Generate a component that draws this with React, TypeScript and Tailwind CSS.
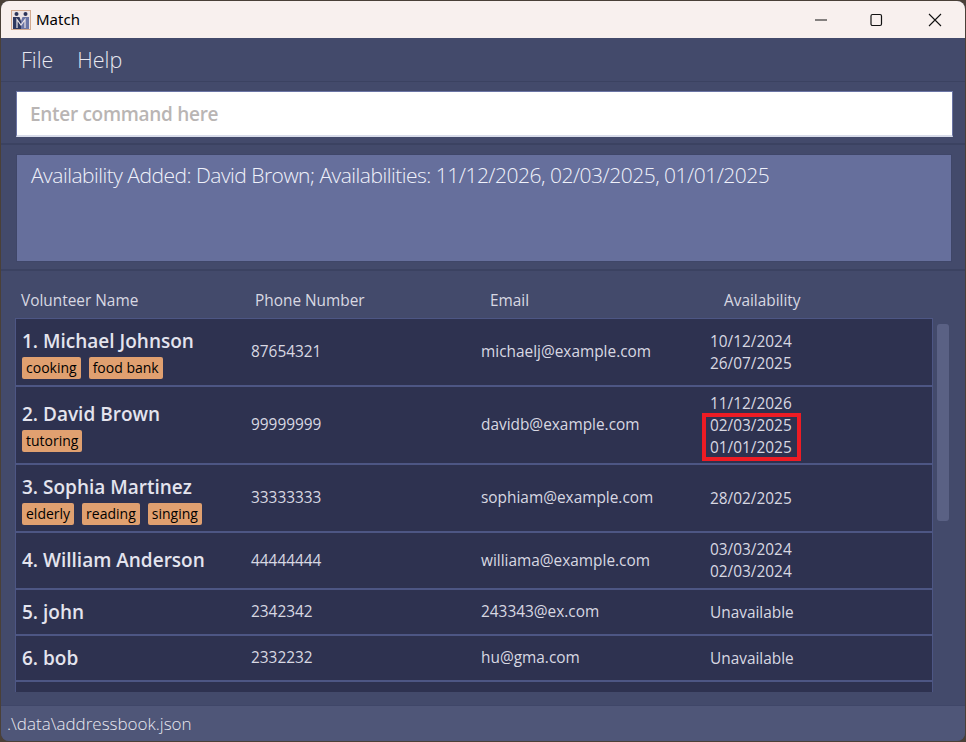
import React from 'react';

interface Volunteer {
  name: string;
  tags: string[];
  phone: string;
  email: string;
  dates: string[];
  height: string;
  nameTop: string;
  marked?: boolean;
}

const VOLUNTEERS: Volunteer[] = [
  { name: '1. Michael Johnson', tags: ['cooking', 'food bank'], phone: '87654321', email: 'michaelj@example.com', dates: ['10/12/2024', '26/07/2025'], height: 'h-[68px]', nameTop: 'pt-[8px]' },
  { name: '2. David Brown', tags: ['tutoring'], phone: '99999999', email: 'davidb@example.com', dates: ['11/12/2026', '02/03/2025', '01/01/2025'], height: 'h-[78px]', nameTop: 'pt-[13px]', marked: true },
  { name: '3. Sophia Martinez', tags: ['elderly', 'reading', 'singing'], phone: '33333333', email: 'sophiam@example.com', dates: ['28/02/2025'], height: 'h-[68px]', nameTop: 'pt-[8px]' },
  { name: '4. William Anderson', tags: [], phone: '44444444', email: 'williama@example.com', dates: ['03/03/2024', '02/03/2024'], height: 'h-[57px]', nameTop: 'pt-[13px]' },
  { name: '5. john', tags: [], phone: '2342342', email: '243343@ex.com', dates: ['Unavailable'], height: 'h-[46px]', nameTop: 'pt-[8px]' },
  { name: '6. bob', tags: [], phone: '2332232', email: 'hu@gma.com', dates: ['Unavailable'], height: 'h-[46px]', nameTop: 'pt-[8px]' },
];

const AppIcon = () => (
  <svg width="20" height="20" viewBox="0 0 20 20" className="shrink-0">
    <rect x="0.5" y="0.5" width="19" height="19" fill="#ece4e6" stroke="#d3aa90" />
    <circle cx="5.5" cy="4" r="2" fill="#2b3358" />
    <circle cx="14.5" cy="4" r="2" fill="#2b3358" />
    <path d="M2 7h6.5l1.5 4v8H2z" fill="#2f3860" />
    <path d="M18 7h-6.5L10 11v8h8z" fill="#6b76a6" />
    <path d="M6 18V9.5l4 5.5 4-5.5V18" fill="none" stroke="#ece4e6" strokeWidth="1.2" />
  </svg>
);

const Row: React.FC<{ v: Volunteer }> = ({ v }) => (
  <div className={`relative flex shrink-0 border-b-2 border-[#4d5684] pl-[6px] ${v.height}`}>
    <div className={`w-[229px] shrink-0 ${v.nameTop}`}>
      <div className="text-[19px] leading-[28px] font-semibold text-[#e4e4ee] whitespace-nowrap">{v.name}</div>
      {v.tags.length > 0 && (
        <div className="flex gap-[8px] mt-[2px]">
          {v.tags.map((tag) => (
            <span key={tag} className="h-[22px] px-[4px] rounded-[2px] bg-[#e0a070] text-black text-[14px] leading-[21px]">
              {tag}
            </span>
          ))}
        </div>
      )}
    </div>
    <div className="w-[230px] shrink-0 flex items-center text-[15.4px] text-[#d8d8e2]">{v.phone}</div>
    <div className="w-[229px] shrink-0 flex items-center text-[15.4px] text-[#d8d8e2]">{v.email}</div>
    <div className="flex flex-col justify-center pt-[1px] text-[15.4px] leading-[22px] text-[#d8d8e2]">
      {v.dates.map((d) => (
        <div key={d}>{d}</div>
      ))}
    </div>
    {v.marked && (
      <div className="absolute left-[686px] top-[26px] w-[99px] h-[48px] border-[4px] border-[#ed1c24]" />
    )}
  </div>
);

export default function App() {
  return (
    <div className="w-[966px] h-[742px] overflow-hidden bg-[#4a4038] font-['Open_Sans','Noto_Sans',sans-serif]">
      <div className="h-[740px] mx-[1px] mt-[1px] rounded-[8px] overflow-hidden flex flex-col bg-[#434a6b]">
        {/* Title bar */}
        <div className="h-[37px] shrink-0 bg-[#f8f0ee] flex items-center pl-[10px]">
          <AppIcon />
          <span className="ml-[5px] text-[15px] text-black font-['Noto_Sans',sans-serif]">Match</span>
          <div className="ml-auto flex items-center text-[#111]">
            <svg width="14" height="14" viewBox="0 0 14 14" className="mr-[41px]">
              <path d="M1 7h12" stroke="currentColor" strokeWidth="1" />
            </svg>
            <svg width="14" height="14" viewBox="0 0 14 14" className="mr-[45px]">
              <rect x="2" y="1.5" width="10.5" height="11" rx="1.5" fill="none" stroke="currentColor" strokeWidth="1.2" />
            </svg>
            <svg width="14" height="14" viewBox="0 0 14 14" className="mr-[23px]">
              <path d="M1 1l12 12M13 1L1 13" stroke="currentColor" strokeWidth="1.1" />
            </svg>
          </div>
        </div>

        {/* Menu */}
        <div className="h-[44px] shrink-0 flex items-center pl-[20px] pt-[2px] gap-[24px] text-[21.5px] font-light text-[#e8e8f0] border-b border-[#3b4261]">
          <span>File</span>
          <span>Help</span>
        </div>

        {/* Command box */}
        <div className="h-[63px] shrink-0 pl-[15px] pr-[12px] pt-[9px] border-b-2 border-[#3b4261]">
          <div className="h-[46px] bg-white border border-[#6a74a4] border-b-2 border-b-[#d8dcea] flex items-center pl-[13px] pt-[1px] text-[19px] tracking-[-0.3px] font-semibold text-[#b9b5b4]">
            Enter command here
          </div>
        </div>

        {/* Result */}
        <div className="h-[126px] shrink-0 pl-[15px] pr-[13px] pt-[9px] border-b-2 border-[#3b4261]">
          <div className="h-[108px] bg-[#666f9c] border border-[#3f4668] pl-[14px] pt-[5px] text-[21px] tracking-[-0.5px] leading-[31px] font-light text-[#f0f2fb] whitespace-nowrap">
            Availability Added: David Brown; Availabilities: 11/12/2026, 02/03/2025, 01/01/2025
          </div>
        </div>

        {/* List */}
        <div className="flex-1 min-h-0 pl-[14px] flex flex-col">
          <div className="h-[47px] shrink-0 flex items-end pb-[6px] text-[15.4px] text-[#d8d8e2]">
            <span className="w-[234px] pl-[6px]">Volunteer Name</span>
            <span className="w-[235px] pl-[6px]">Phone Number</span>
            <span className="w-[234px] pl-[6px]">Email</span>
            <span className="pl-[6px]">Availability</span>
          </div>
          <div className="flex h-[374px] shrink-0">
            <div className="w-[918px] shrink-0 h-full overflow-hidden flex flex-col bg-[#2e3250] border border-b-0 border-[#4d5684]">
              {VOLUNTEERS.map((v) => (
                <Row key={v.name} v={v} />
              ))}
            </div>
            <div className="ml-[4px] pt-[6px]">
              <div className="w-[12px] h-[197px] rounded-[3px] bg-[#5a6184]" />
            </div>
          </div>
          <div className="flex-1" />
        </div>

        {/* Status bar */}
        <div className="h-[36px] shrink-0 bg-[#4f5678] border-t border-[#3f4668] pl-[6px] flex items-center text-[17px] font-light text-[#e8e8f0]">
          .\data\addressbook.json
        </div>
      </div>
    </div>
  );
}
